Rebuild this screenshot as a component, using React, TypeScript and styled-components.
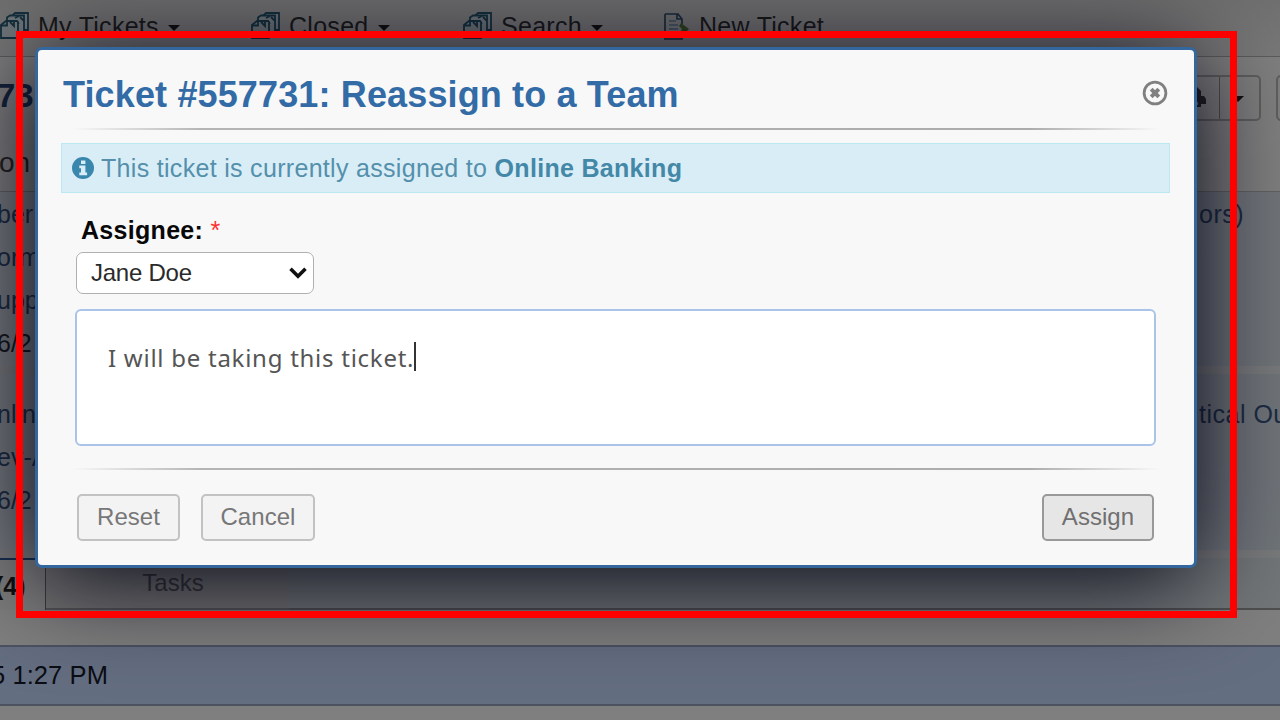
import React from "react";
import styled, { createGlobalStyle } from "styled-components";

const Global = createGlobalStyle`
  * { box-sizing: border-box; }
  body { margin: 0; background: #7d7d7d; font-family: "Liberation Sans", Arial, sans-serif; overflow: hidden; }
`;

const Screen = styled.div`
  position: relative;
  width: 1280px;
  height: 720px;
  overflow: hidden;
  background: #7f7f7f;
  color: #111;
`;

const Page = styled.div`
  display: flex;
  flex-direction: column;
  height: 720px;
`;

const Nav = styled.nav`
  display: flex;
  height: 57px;
  padding-top: 10px;
  background: linear-gradient(#707070, #797979);
  border-bottom: 1px solid #5c5c5c;
`;

const NavItem = styled.div<{ $w: number }>`
  flex: none;
  display: flex;
  width: ${(p) => p.$w}px;
  height: 32px;
  align-items: center;
  white-space: nowrap;
  font-size: 25px;
  letter-spacing: 0.28px;
  color: #1a1a1a;
  svg { flex: none; margin-right: 8px; }
`;

const Caret = styled.span`
  margin: 3px 0 0 9px;
  border: 6px solid transparent;
  border-top-color: #111;
  border-bottom-width: 0;
`;

const TicketHeader = styled.header`
  display: flex;
  justify-content: space-between;
  height: 72px;
  padding-top: 18px;
`;

const TicketNumber = styled.div`
  margin: 2px 0 0 -3px;
  font-size: 33px;
  line-height: 38px;
  font-weight: bold;
  color: #14233a;
`;

const Actions = styled.div`
  display: flex;
  height: 46px;
  gap: 15px;
`;

const ButtonGroup = styled.div<{ $w: number }>`
  flex: none;
  display: flex;
  width: ${(p) => p.$w}px;
  border: 2px solid #5f5f5f;
  border-radius: 5px;
`;

const GroupCell = styled.div<{ $w: number }>`
  width: ${(p) => p.$w}px;
  display: flex;
  align-items: center;
  justify-content: flex-end;
  padding-right: 12px;
  & + & { border-left: 1px solid #505050; justify-content: center; padding: 0 3px 0 0; }
  ${Caret} { margin: 2px 0 0; }
`;

const NextGroup = styled(ButtonGroup)`
  margin-right: -56px;
`;

const Subject = styled.div`
  height: 63px;
  padding-top: 18px;
  margin-left: -1px;
  font-size: 28px;
  line-height: 32px;
  color: #222;
  border-bottom: 1px solid #626262;
`;

const Details = styled.section<{ $h: number; $top: number }>`
  height: ${(p) => p.$h}px;
  padding-top: ${(p) => p.$top}px;
  background: linear-gradient(90deg, #777b7f, #70757a);
  border-bottom: 8px solid #797a7b;
`;

const DetailRow = styled.div<{ $ink?: string }>`
  display: flex;
  justify-content: space-between;
  height: 43px;
  line-height: 42px;
  margin-left: -3px;
  white-space: nowrap;
  font-size: 25px;
  color: ${(p) => p.$ink ?? "#1d2d43"};
`;

const DetailEnd = styled.span<{ $w: number }>`
  width: ${(p) => p.$w}px;
  letter-spacing: 0.5px;
`;

const Tabs = styled.div`
  display: flex;
  height: 52px;
`;

const ActiveTab = styled.div`
  width: 46px;
  border-top: 2px solid #17304f;
  border-right: 1px solid #3c3c3c;
  background: #7d7d7d;
  font-size: 25px;
  line-height: 52px;
  font-weight: bold;
  text-indent: -5px;
`;

const Tab = styled.div`
  width: 243px;
  border-bottom: 2px solid #555;
  background: #747474;
  text-align: center;
  padding-left: 11px;
  font-size: 24px;
  line-height: 50px;
  color: #383838;
`;

const TabFill = styled.div`
  flex: 1;
  border-bottom: 2px solid #4f4f4f;
  background: #727678;
`;

const ThreadBar = styled.div`
  height: 61px;
  margin-top: 35px;
  border-top: 2px solid #4c5260;
  border-bottom: 2px solid #4c5260;
  background: #646e81;
  font-size: 25.5px;
  line-height: 57px;
  text-indent: -9px;
  letter-spacing: 0.08px;
  color: #0b0d14;
`;

const Dialog = styled.div`
  position: absolute;
  left: 35px;
  top: 47px;
  width: 1162px;
  height: 521px;
  border: 3px solid #34679d;
  border-radius: 7px;
  background: #f8f8f8;
  box-shadow: 0 10px 100px #000011;
  padding: 0 25px;
`;

const DialogHead = styled.div`
  display: flex;
  justify-content: space-between;
  height: 78px;
  padding-top: 22px;
`;

const Title = styled.h3`
  margin: 0;
  font-size: 36px;
  line-height: 46px;
  letter-spacing: 0.14px;
  white-space: nowrap;
  color: #326ba6;
`;

const CloseIcon = styled.svg`
  margin: 8px 1px 0 0;
`;

const Rule = styled.div`
  height: 2px;
  margin: 0 9px;
  background: linear-gradient(90deg, transparent, #b4b4b4 12%, #acacac 88%, transparent);
`;

const Notice = styled.div`
  display: flex;
  align-items: center;
  height: 50px;
  margin: 13px 0 0 -2px;
  width: 1109px;
  padding-left: 10px;
  border: 1px solid #bce8f1;
  background: #d9edf7;
  font-size: 25px;
  letter-spacing: 0.31px;
  white-space: pre;
  color: #5490ac;
  svg { margin-right: 7px; }
  b { color: #4488a8; }
`;

const Label = styled.div`
  margin: 21px 0 0 18px;
  font-size: 25px;
  line-height: 33px;
  letter-spacing: 0.3px;
  font-weight: bold;
  color: #080808;
  span { color: #ff3030; font-weight: normal; }
`;

const SelectBox = styled.div`
  display: flex;
  align-items: center;
  justify-content: space-between;
  width: 238px;
  height: 42px;
  margin: 5px 0 0 13px;
  padding: 0 6px 0 14px;
  border: 1.5px solid #b0b0b0;
  border-radius: 7px;
  background: #fff;
  font-size: 24px;
  letter-spacing: -0.25px;
  color: #2a2a2a;
`;

const Editor = styled.div`
  display: flex;
  align-items: flex-start;
  width: 1081px;
  height: 137px;
  margin: 15px 0 22px 12px;
  padding: 31px 31px;
  border: 2px solid #a9c4e6;
  border-radius: 6px;
  background: #fff;
  font-family: "Noto Sans", sans-serif;
  font-size: 24px;
  line-height: 31px;
  letter-spacing: 0.74px;
  white-space: nowrap;
  color: #555;
`;

const TextCursor = styled.span`
  width: 2px;
  height: 29px;
  background: #333;
`;

const Footer = styled.div`
  display: flex;
  margin: 24px 0 0 14px;
`;

const Button = styled.button<{ $w: number; $primary?: boolean }>`
  width: ${(p) => p.$w}px;
  height: 47px;
  padding: 0 0 2px;
  margin: ${(p) => (p.$primary ? "0 15px 0 auto" : "0 21px 0 0")};
  border: 2px solid ${(p) => (p.$primary ? "#999" : "#c2c2c2")};
  border-radius: 5px;
  background: ${(p) => (p.$primary ? "#e6e6e6" : "#f3f3f3")};
  font-family: inherit;
  font-size: 24px;
  letter-spacing: 0.05px;
  color: ${(p) => (p.$primary ? "#707070" : "#777")};
`;

const Highlight = styled.div`
  position: absolute;
  left: 16px;
  top: 31px;
  width: 1221px;
  height: 587px;
  border: 7px solid #ff0000;
`;

const Stack = () => (
  <svg width="30" height="28" viewBox="0 0 30 28" fill="#70777b" stroke="#15303d" strokeWidth="1.8">
    <path d="M12 4l3-3h13v17h-5" />
    <path d="M7 8V5.500l3-2h14v18h-5" />
    <path d="M15 6l4-2M12 9h4l3 3" fill="none" />
    <path d="M1 13l5-4h11l1 1v16H1z" />
    <path d="M1 13.500h6V9M10 10l4 4v-4M20 5l4 4" fill="none" />
  </svg>
);

const NewDoc = () => (
  <svg width="27" height="27" viewBox="0 0 27 27" fill="none" stroke="#1b2d3d" strokeWidth="1.7">
    <path d="M1 1h13l4 5v5M18 22v4H1V1M13 1v5h5" />
    <path d="M5 8h7M5 12h9M5 16h9" stroke="#3c5263" strokeWidth="1.3" />
    <path d="M17 10l8 6-8 8-2-2 3-6-3-3z" fill="#2f4620" stroke="none" />
  </svg>
);

export default function App() {
  return (
    <Screen>
      <Global />
      <Page>
        <Nav>
          <NavItem $w={251}><Stack />My Tickets<Caret /></NavItem>
          <NavItem $w={212}><Stack />Closed<Caret /></NavItem>
          <NavItem $w={201}><Stack />Search<Caret /></NavItem>
          <NavItem $w={240}><NewDoc />New Ticket</NavItem>
        </Nav>
        <TicketHeader>
          <TicketNumber>73</TicketNumber>
          <Actions>
            <ButtonGroup $w={100}>
              <GroupCell $w={57}>
                <svg width="28" height="24" viewBox="0 0 28 24" fill="#222">
                  <path d="M6 1h12l4 4v5h3l2 3v5h-5v3H6v-3H1v-8h5z" />
                  <path d="M9 4h8v6H9zM9 16h10v3H9z" fill="#707070" />
                </svg>
              </GroupCell>
              <GroupCell $w={41}><Caret /></GroupCell>
            </ButtonGroup>
            <NextGroup $w={60} />
          </Actions>
        </TicketHeader>
        <Subject>on</Subject>
        <Details $h={182} $top={1}>
          <DetailRow>ber<DetailEnd $w={81}>ors)</DetailEnd></DetailRow>
          <DetailRow>orm</DetailRow>
          <DetailRow>upp</DetailRow>
          <DetailRow $ink="#15181d">6/2</DetailRow>
        </Details>
        <Details $h={184} $top={19}>
          <DetailRow>nlin<DetailEnd $w={81}>tical Ou</DetailEnd></DetailRow>
          <DetailRow>ev-A</DetailRow>
          <DetailRow $ink="#1d2d43">6/2</DetailRow>
        </Details>
        <Tabs>
          <ActiveTab>(4)</ActiveTab>
          <Tab>Tasks</Tab>
          <TabFill />
        </Tabs>
        <ThreadBar>5 1:27 PM</ThreadBar>
      </Page>
      <Dialog>
        <DialogHead>
          <Title>Ticket #557731: Reassign to a Team</Title>
          <CloseIcon width="26" height="26" viewBox="0 0 26 26" fill="none" stroke="#808080">
            <circle cx="13" cy="13" r="10.9" strokeWidth="2.8" />
            <path d="M9.2 9.2l7.6 7.6M16.8 9.2l-7.6 7.6" strokeWidth="4" />
          </CloseIcon>
        </DialogHead>
        <Rule />
        <Notice>
          <svg width="22" height="22" viewBox="0 0 22 22">
            <circle cx="11" cy="11" r="11" fill="#3a87ad" />
            <path d="M9 3.5h4.400v3.400H9zM7.300 8.600h6.100v7h1.700v2.700H7.300v-2.700H9v-4.300H7.300z" fill="#d9edf7" />
          </svg>
          This ticket is currently assigned to <b>Online Banking</b>
        </Notice>
        <Label>Assignee: <span>*</span></Label>
        <SelectBox>
          Jane Doe
          <svg width="18" height="12" viewBox="0 0 18 12" fill="none" stroke="#111" strokeWidth="3.6">
            <path d="M1.500 1.800L9 9.200l7.500-7.400" />
          </svg>
        </SelectBox>
        <Editor>I will be taking this ticket.<TextCursor /></Editor>
        <Rule />
        <Footer>
          <Button $w={103}>Reset</Button>
          <Button $w={114}>Cancel</Button>
          <Button $w={112} $primary>Assign</Button>
        </Footer>
      </Dialog>
      <Highlight />
    </Screen>
  );
}
